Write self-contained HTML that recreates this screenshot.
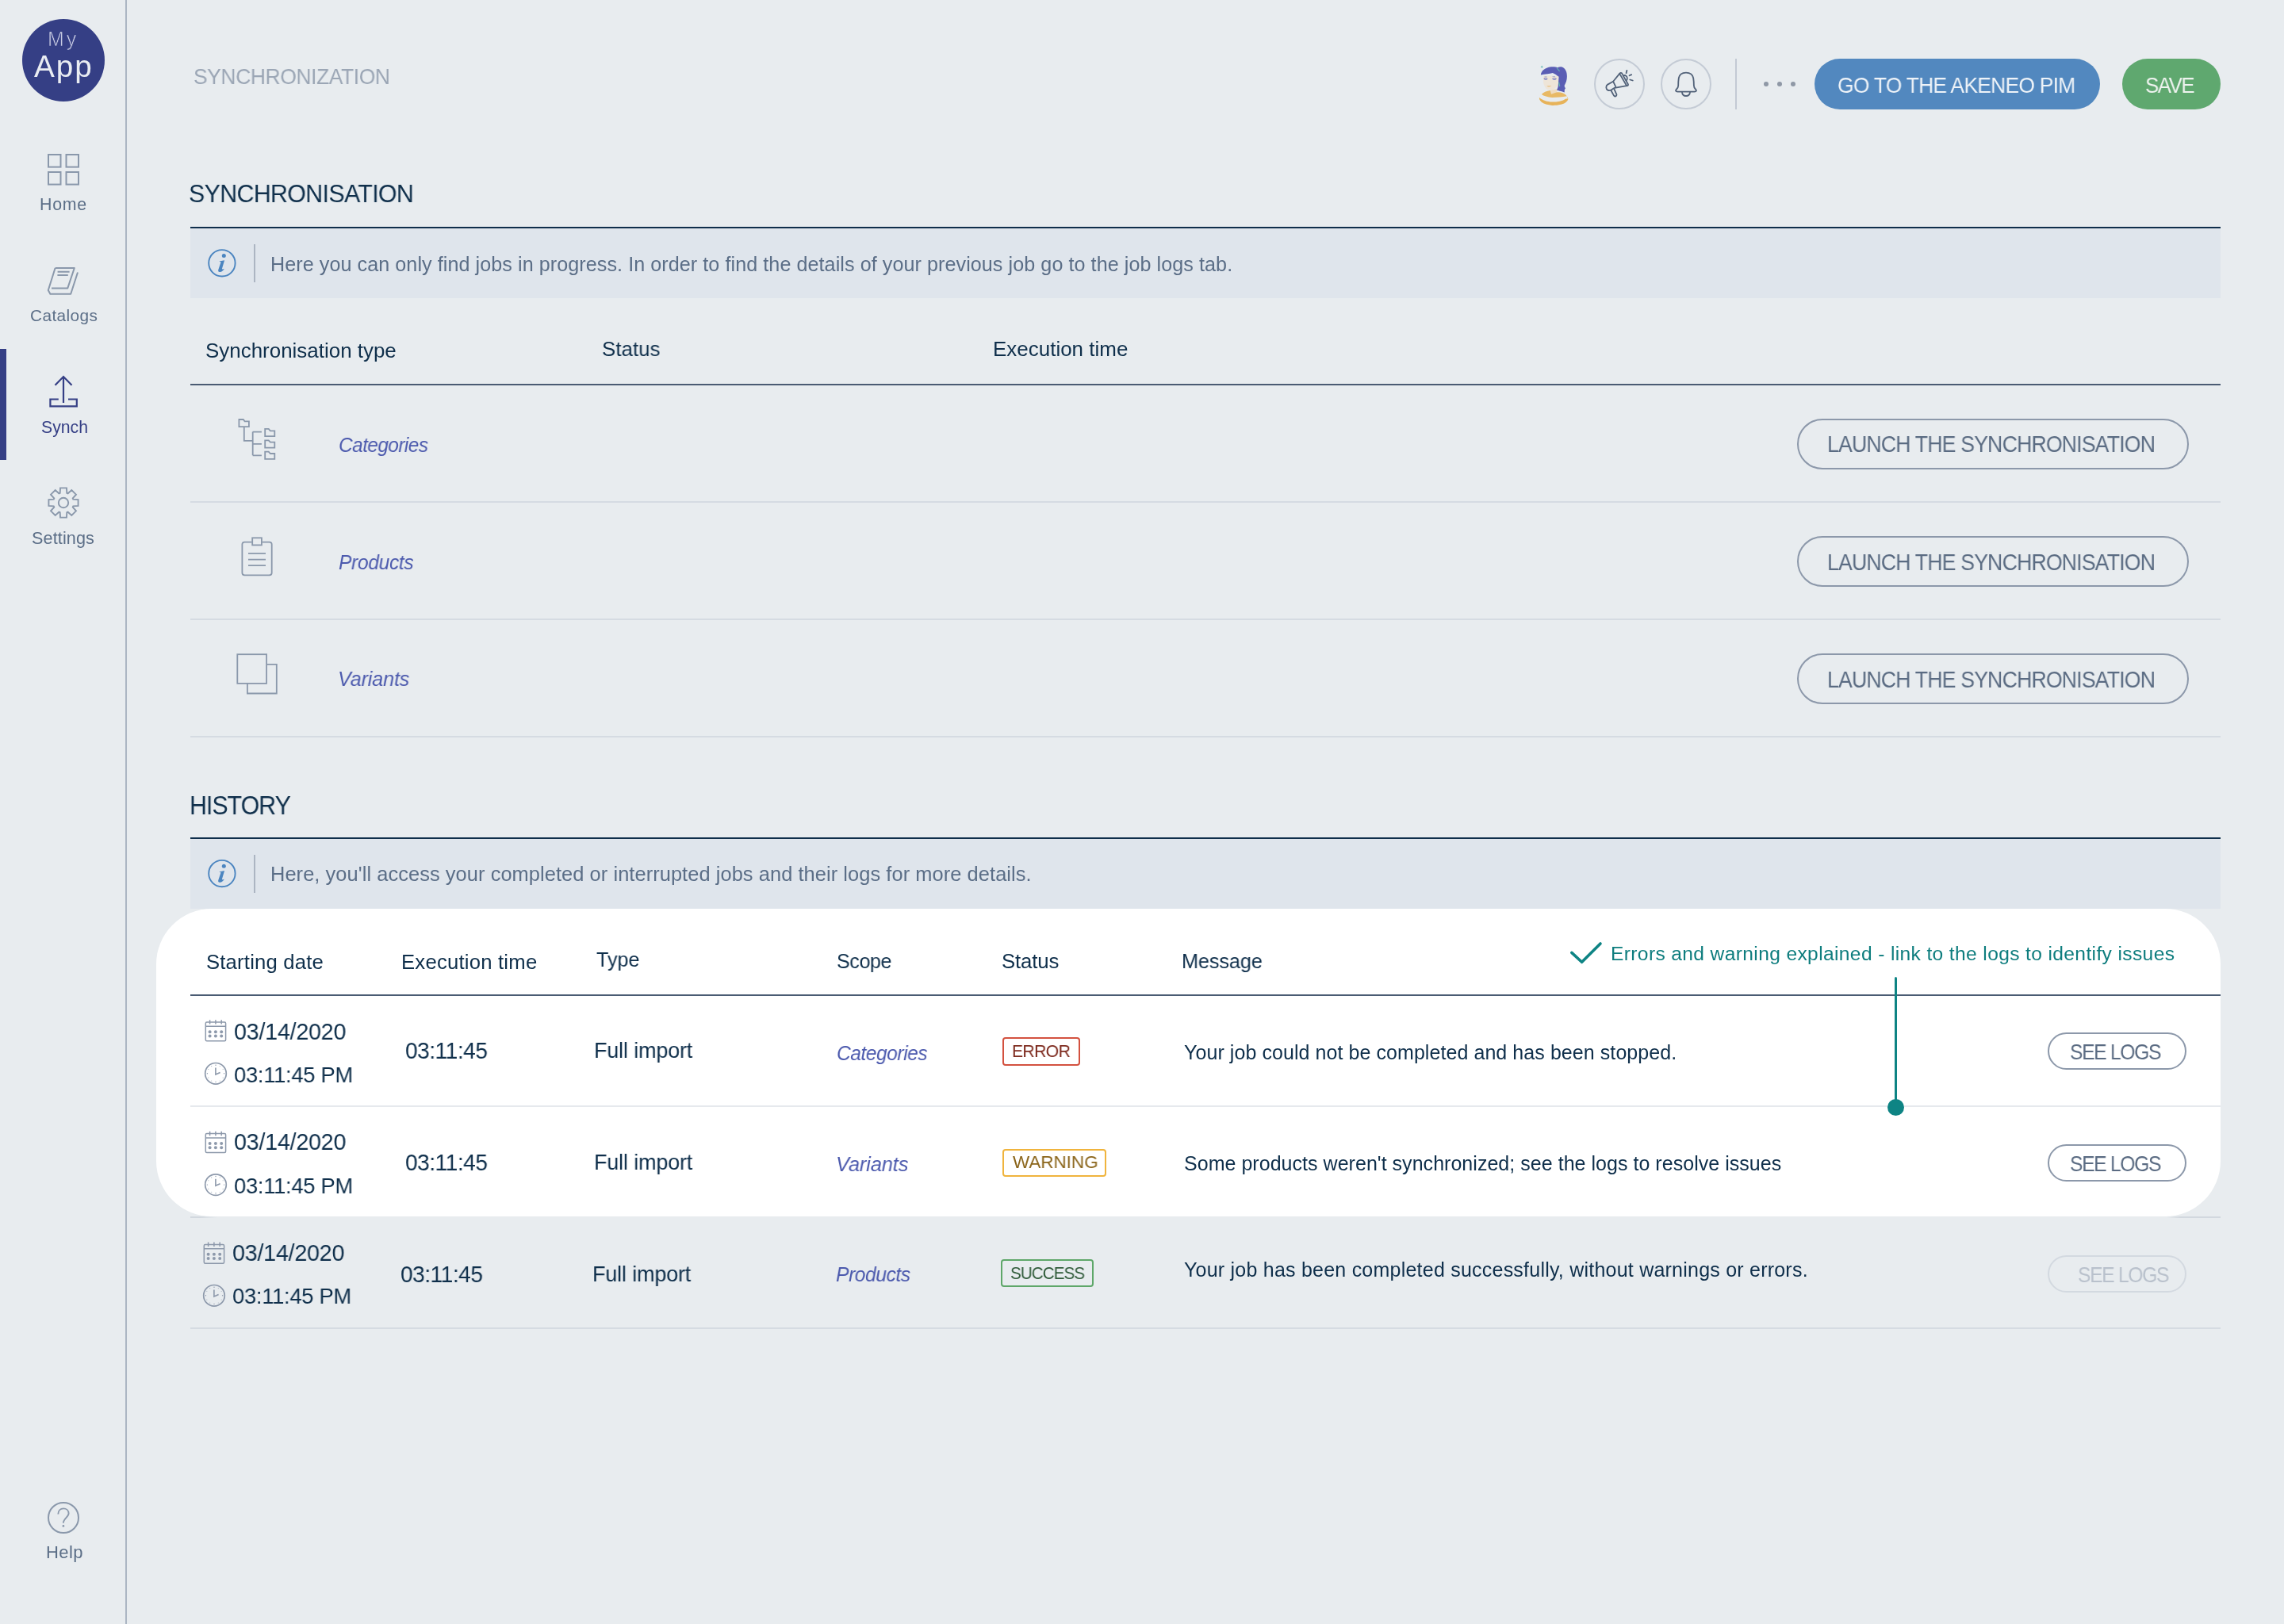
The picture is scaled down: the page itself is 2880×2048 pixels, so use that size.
<!DOCTYPE html>
<html><head><meta charset="utf-8"><title>Synchronization</title>
<style>
html,body{margin:0;padding:0;}
body{width:2880px;height:2048px;background:#e8ecef;position:relative;overflow:hidden;font-family:"Liberation Sans", sans-serif;}
.t{position:absolute;white-space:nowrap;will-change:transform;}
.a{position:absolute;}
</style></head><body>
<div class="a" style="left:158.0px;top:0.0px;width:2.0px;height:2048.0px;background:#abb5c3;"></div>
<div class="a" style="left:0.0px;top:440.0px;width:8.0px;height:140.0px;background:#353f85;"></div>
<div class="a" style="left:28.0px;top:24.0px;width:104.0px;height:104.0px;background:#353f85;border-radius:50%"></div>
<div class="a" style="left:2188.0px;top:74.0px;width:2.0px;height:64.0px;background:#c3cad4;"></div>
<div class="a" style="left:2288.0px;top:74.0px;width:360.0px;height:64.0px;background:#5288bf;border-radius:32px"></div>
<div class="a" style="left:2676.0px;top:74.0px;width:124.0px;height:64.0px;background:#5fa86f;border-radius:32px"></div>
<div class="a" style="left:240.0px;top:286.0px;width:2560.0px;height:2.0px;background:#0f2e4b;"></div>
<div class="a" style="left:240.0px;top:288.0px;width:2560.0px;height:87.5px;background:#dfe5ec;"></div>
<div class="a" style="left:320.2px;top:308.0px;width:1.8px;height:48.0px;background:#acb5c2;"></div>
<div class="a" style="left:240.0px;top:484.0px;width:2560.0px;height:2.0px;background:#4a5b73;"></div>
<div class="a" style="left:240.0px;top:632.0px;width:2560.0px;height:2.0px;background:#d5dbe2;"></div>
<div class="a" style="left:240.0px;top:780.0px;width:2560.0px;height:2.0px;background:#d5dbe2;"></div>
<div class="a" style="left:240.0px;top:928.0px;width:2560.0px;height:2.0px;background:#d5dbe2;"></div>
<div class="a" style="left:2266px;top:528.0px;width:490px;height:60px;border:2px solid #8c98aa;border-radius:32px;"></div>
<div class="a" style="left:2266px;top:676.2px;width:490px;height:60px;border:2px solid #8c98aa;border-radius:32px;"></div>
<div class="a" style="left:2266px;top:824.4px;width:490px;height:60px;border:2px solid #8c98aa;border-radius:32px;"></div>
<div class="a" style="left:240.0px;top:1056.0px;width:2560.0px;height:2.0px;background:#0f2e4b;"></div>
<div class="a" style="left:240.0px;top:1058.0px;width:2560.0px;height:87.5px;background:#dfe5ec;"></div>
<div class="a" style="left:320.2px;top:1078.0px;width:1.8px;height:48.0px;background:#acb5c2;"></div>
<div class="a" style="left:240.0px;top:1534.0px;width:34.0px;height:2.0px;background:linear-gradient(to right,#d2d8df 0%,#d2d8df 35%,rgba(210,216,223,0) 100%);"></div>
<div class="a" style="left:2732.0px;top:1534.0px;width:68.0px;height:2.0px;background:linear-gradient(to right,rgba(210,216,223,0) 0%,#d2d8df 25%,#d2d8df 100%);"></div>
<div class="a" style="left:197.0px;top:1146.0px;width:2603.0px;height:388.0px;background:#ffffff;border-radius:70px"></div>
<div class="a" style="left:240.0px;top:1254.0px;width:2560.0px;height:2.0px;background:#4a5b73;"></div>
<div class="a" style="left:240.0px;top:1394.0px;width:2560.0px;height:2.0px;background:#e6e9ed;"></div>
<div class="a" style="left:240.0px;top:1674.0px;width:2560.0px;height:2.0px;background:#d5dbe2;"></div>
<div class="a" style="left:1264px;top:1308px;width:94px;height:32px;border:2px solid #d3513f;border-radius:4px;"></div>
<div class="a" style="left:1264px;top:1448.5px;width:127px;height:31px;border:2px solid #f0b43d;border-radius:4px;"></div>
<div class="a" style="left:1262.4px;top:1588.4px;width:113px;height:31px;border:2px solid #5ea769;border-radius:4px;"></div>
<div class="a" style="left:2582px;top:1302.0px;width:171px;height:43px;border:2px solid #8c98aa;border-radius:24px;"></div>
<div class="a" style="left:2582px;top:1442.5px;width:171px;height:43px;border:2px solid #8c98aa;border-radius:24px;"></div>
<div class="a" style="left:2582px;top:1582.8px;width:171px;height:43px;border:2px solid #d3d9e0;border-radius:24px;"></div>
<div class="a" style="left:2388.5px;top:1232.0px;width:3.0px;height:164.0px;background:#0e8484;border-radius:1.5px"></div>
<div class="a" style="left:2379.5px;top:1385.5px;width:21.0px;height:21.0px;background:#0e8484;border-radius:50%"></div>
<svg class="a" style="left:0;top:0" width="2880" height="2048" viewBox="0 0 2880 2048"><rect x="61.0" y="195.0" width="15.5" height="15.6" fill="none" stroke="#8a98ab" stroke-width="2"/>
<rect x="83.5" y="195.0" width="15.5" height="15.6" fill="none" stroke="#8a98ab" stroke-width="2"/>
<rect x="61.0" y="217.0" width="15.5" height="15.6" fill="none" stroke="#8a98ab" stroke-width="2"/>
<rect x="83.5" y="217.0" width="15.5" height="15.6" fill="none" stroke="#8a98ab" stroke-width="2"/>
<g fill="none" stroke="#8a98ab" stroke-width="2" stroke-linejoin="round">
<path d="M69.6,338 H93.8 L85.3,363.4 H65"/>
<path d="M69.6,338 L60.8,366 L63.4,370.8 H89.2 L98,343.5"/>
<path d="M72.6,342.8 H87.6 M72.4,347 H85.8"/>
</g>
<g fill="none" stroke="#353f85" stroke-width="2.2">
<path d="M80,475 V508 M69.5,485.8 L80,475 L90.5,485.8"/>
<path d="M73.8,503.5 H63.4 V512.4 H96.8 V503.5 H86"/>
</g>
<path d="M75.68,621.74 L76.03,615.42 L83.97,615.42 L84.32,621.74 L85.62,622.28 L90.33,618.05 L95.95,623.67 L91.72,628.38 L92.26,629.68 L98.58,630.03 L98.58,637.97 L92.26,638.32 L91.72,639.62 L95.95,644.33 L90.33,649.95 L85.62,645.72 L84.32,646.26 L83.97,652.58 L76.03,652.58 L75.68,646.26 L74.38,645.72 L69.67,649.95 L64.05,644.33 L68.28,639.62 L67.74,638.32 L61.42,637.97 L61.42,630.03 L67.74,629.68 L68.28,628.38 L64.05,623.67 L69.67,618.05 L74.38,622.28 Z" fill="none" stroke="#8a98ab" stroke-width="1.9" stroke-linejoin="miter"/>
<circle cx="80" cy="634" r="6.2" fill="none" stroke="#8a98ab" stroke-width="1.9"/>
<circle cx="80" cy="1914" r="19" fill="none" stroke="#8a98ab" stroke-width="2"/>
<path d="M73.3,1909.6 C73.3,1905.2 76.2,1902.4 80,1902.4 C83.8,1902.4 86.6,1905 86.6,1908.6 C86.6,1912.8 80,1915.2 79.8,1920.6" fill="none" stroke="#8a98ab" stroke-width="1.9" stroke-linecap="butt"/>
<circle cx="79.9" cy="1924.4" r="1.4" fill="#8a98ab"/>
<g>
<path d="M1955.5,113.6 L1964.2,112 L1962.5,118 L1956.2,119.2 Z" fill="#efdcc0"/>
<path d="M1943.9,119 C1946,116.5 1950,114.6 1955,114 L1956,118.8 L1962.5,116.5 C1966.5,115.6 1972,117.2 1974.2,119.5 C1976.5,121.8 1977.5,124 1977.2,125.6 L1975.6,121.2 C1970,122.2 1964,122.7 1957.2,123.1 C1951.5,122.6 1946.5,121 1943.9,119 Z" fill="#e8b965"/>
<path d="M1940.9,123.1 C1945,126.5 1951,128.6 1957.2,128.6 C1964,128.6 1970,127.6 1974.6,124.4 L1977.4,124.6 C1977,128 1973,130.8 1968.3,131.8 C1964,132.8 1960,133 1957.2,132.9 C1951.5,132.6 1946.5,131 1943.5,128.6 C1941.5,126.8 1940.8,124.8 1940.9,123.1 Z" fill="#e7b35a"/>
<path d="M1946.1,95.4 L1965.7,95.7 L1964.6,107.6 C1962,111 1959,113.2 1955.7,113.5 C1952.5,113.6 1950.5,112.8 1949.3,111.5 C1947.5,108.5 1946.3,106 1946.1,103.9 Z" fill="#eee5d8"/>
<path d="M1942.8,94.4 C1943.5,89.5 1947.5,85.6 1955.7,84.3 C1959.5,84 1962,84.5 1964,85.2 C1966,84.2 1968,84 1970.2,84.8 C1974,86.5 1976,91 1975.9,96.5 C1975.8,101 1974.6,104.5 1972.6,108 C1972.8,109.8 1973.6,110.6 1974,111.5 C1973,112.2 1972.6,113.5 1972.8,116.4 C1970.5,115.6 1969,115.3 1968.3,115 C1966,114.6 1964.4,114.2 1963.1,113.5 C1964.2,111.2 1964.8,109.5 1964.8,107.6 L1965.6,96.8 C1963,95 1960.5,93 1957.9,92 C1955.5,92.6 1953.5,93 1951.3,93.2 C1948.5,93.6 1945.5,94 1942.8,94.4 Z" fill="#5a5db4"/>
<path d="M1963,85.6 L1966.6,89.8" stroke="#62b3b0" stroke-width="1.1"/>
<path d="M1946.8,99.2 C1948,98.3 1950,98.3 1951.2,99.4 C1950,100.9 1948,100.9 1946.8,99.2 Z M1957.6,99.4 C1958.8,98.3 1961,98.3 1962.4,99.4 C1961,100.9 1959,100.9 1957.6,99.4 Z" fill="#f7f4ee" stroke="#5a5db4" stroke-width="0.8"/>
<path d="M1947.5,96.8 h3 M1957.5,96.6 h3.5" stroke="#9a9ccc" stroke-width="0.7"/>
<path d="M1950.2,108.4 C1952,109.8 1954.5,109.8 1956.4,108.3 Z" fill="#e8b868"/>
<path d="M1965.6,103.6 L1966.8,109" stroke="#62b3b0" stroke-width="1.2"/>
<path d="M1944.2,82.5 l0.6,1.2 1.2,0.6 -1.2,0.6 -0.6,1.2 -0.6,-1.2 -1.2,-0.6 1.2,-0.6 Z" fill="#6cbcb8"/>
</g>
<circle cx="2042" cy="106" r="31" fill="none" stroke="#c4cbd5" stroke-width="2"/>
<circle cx="2126" cy="106" r="31" fill="none" stroke="#c4cbd5" stroke-width="2"/>
<g fill="none" stroke="#526279" stroke-width="1.8" stroke-linecap="round" stroke-linejoin="round">
<path d="M2042.2,92.9 C2042.8,91.6 2044.4,91.4 2045.2,92.6 L2052.9,106.2 C2053.5,107.4 2052.6,108.4 2051.2,108.2 Z"/>
<path d="M2042.2,92.9 L2034.1,102.7 L2027.2,106.6 C2024.6,108.4 2024.8,112.4 2027.2,113.6 C2028.6,114.3 2030,114.2 2031.4,113.5 L2036,110.8 L2051.2,108.2"/>
<path d="M2034.1,102.7 L2037.3,109.3"/>
<path d="M2031.4,114 L2035,120.6 C2036,122.2 2038.8,121.4 2038.4,119.2 L2035.4,112.4"/>
<path d="M2047,95.4 C2049.5,94.2 2052.6,96.5 2051.8,99.6 C2051.6,100.4 2051.3,100.9 2051,101.3"/>
<path d="M2051.4,88.8 L2050.6,92.2 M2057.2,94.1 L2054.6,95.3 M2055.3,100.5 L2058.8,101.5"/>
</g>
<g fill="none" stroke="#526279" stroke-width="2.1" stroke-linejoin="round">
<path d="M2116.2,108 C2116.2,104 2116.4,101 2116.8,98.5 C2117.6,94.2 2121,91.6 2126,91.6 C2131,91.6 2134.4,94.2 2135.2,98.5 C2135.6,101 2135.9,104 2135.9,108 C2135.9,110 2136.5,111 2138,112.5 C2139.8,114.2 2139,115.6 2136.8,115.6 L2115.2,115.6 C2113,115.6 2112.2,114.2 2114,112.5 C2115.5,111 2116.2,110 2116.2,108 Z" stroke-width="1.8"/>
<path d="M2120.9,115.8 C2121.2,119 2123.3,121 2126,121 C2128.7,121 2130.8,119 2131.1,115.8" stroke-width="1.8"/>
</g>
<circle cx="2227" cy="106" r="3" fill="#8f98a6"/>
<circle cx="2244" cy="106" r="3" fill="#8f98a6"/>
<circle cx="2261" cy="106" r="3" fill="#8f98a6"/>
<circle cx="279.9" cy="331.8" r="16.7" fill="none" stroke="#4b85c0" stroke-width="1.9"/>
<circle cx="282.3" cy="322.4" r="2.5" fill="#4b85c0"/>
<path transform="translate(0,0.0)" d="M276.3,329.6 L283.1,328.2 L279.9,339 C280.5,339.8 281.5,339.5 282.8,339 C281.5,341 279.5,343.2 277,343 C275,342.8 274.8,341.5 275.5,339.5 L278.6,330.5 C277.8,330.2 276.8,330 276.3,329.6 Z" fill="#4b85c0"/>
<circle cx="279.9" cy="1101.6" r="16.7" fill="none" stroke="#4b85c0" stroke-width="1.9"/>
<circle cx="282.3" cy="1092.2" r="2.5" fill="#4b85c0"/>
<path transform="translate(0,769.8)" d="M276.3,329.6 L283.1,328.2 L279.9,339 C280.5,339.8 281.5,339.5 282.8,339 C281.5,341 279.5,343.2 277,343 C275,342.8 274.8,341.5 275.5,339.5 L278.6,330.5 C277.8,330.2 276.8,330 276.3,329.6 Z" fill="#4b85c0"/>
<g fill="none" stroke="#8a98ab" stroke-width="1.8">
<path d="M301.4,538.2 V529 H306.8 L308.6,531.3 H313.9 V538.2 Z"/>
<path d="M307.8,538.2 V555.8 H318.7"/>
<path d="M318.7,544.6 V574.3 M318.7,544.6 H329.9 M318.7,559.9 H329.9 M318.7,574.3 H329.9"/>
<path d="M334.2,550.2 V540.9 H338.7 L340.9,543.3 H346.3 V550.2 Z"/>
<path d="M334.2,564.6 V555.3 H338.7 L340.9,557.7 H346.3 V564.6 Z"/>
<path d="M334.2,578.9 V569.6 H338.7 L340.9,572.0 H346.3 V578.9 Z"/>
</g>
<g fill="none" stroke="#8a98ab" stroke-width="1.8">
<path d="M317.6,683.6 H308.4 Q305.4,683.6 305.4,686.6 V722.3 Q305.4,725.3 308.4,725.3 H339.7 Q342.7,725.3 342.7,722.3 V686.6 Q342.7,683.6 339.7,683.6 H330.6"/>
<rect x="318.2" y="678.3" width="11.7" height="9.1"/>
<path d="M313,697.8 H335 M313,705.6 H335 M313,713.1 H335"/>
</g>
<g fill="none" stroke="#8a98ab" stroke-width="1.8">
<rect x="299.3" y="825.2" width="36.8" height="36.7"/>
<path d="M336.1,837.9 H348.8 V874.5 H311.9 V861.9"/>
</g>
<g transform="translate(0.0,0.0)" fill="none" stroke="#8d99ab" stroke-width="1.5"><rect x="259.3" y="1289" width="25.3" height="23.8" rx="1.5"/><path d="M259.3,1294.3 H284.6 M264.6,1286.2 V1291.6 M271.9,1286.2 V1291.6 M279.2,1286.2 V1291.6"/><circle cx="264.6" cy="1301.3" r="2" fill="#8d99ab" stroke="none"/><circle cx="264.6" cy="1306.6" r="2" fill="#8d99ab" stroke="none"/><circle cx="271.9" cy="1301.3" r="2" fill="#8d99ab" stroke="none"/><circle cx="271.9" cy="1306.6" r="2" fill="#8d99ab" stroke="none"/><circle cx="279.2" cy="1301.3" r="2" fill="#8d99ab" stroke="none"/><circle cx="279.2" cy="1306.6" r="2" fill="#8d99ab" stroke="none"/></g>
<g transform="translate(0.0,0.0)" fill="none" stroke="#8d99ab"><circle cx="272" cy="1353.8" r="13.3" stroke-width="1.7"/><path d="M271.9,1346.4 V1355 L277.6,1352.4" stroke-width="1.6"/><circle cx="272.00" cy="1343.20" r="0.7" fill="#8d99ab" stroke="none"/><circle cx="277.30" cy="1344.62" r="0.55" fill="#a3adbb" stroke="none"/><circle cx="281.18" cy="1348.50" r="0.55" fill="#a3adbb" stroke="none"/><circle cx="282.60" cy="1353.80" r="0.7" fill="#8d99ab" stroke="none"/><circle cx="281.18" cy="1359.10" r="0.55" fill="#a3adbb" stroke="none"/><circle cx="277.30" cy="1362.98" r="0.55" fill="#a3adbb" stroke="none"/><circle cx="272.00" cy="1364.40" r="0.7" fill="#8d99ab" stroke="none"/><circle cx="266.70" cy="1362.98" r="0.55" fill="#a3adbb" stroke="none"/><circle cx="262.82" cy="1359.10" r="0.55" fill="#a3adbb" stroke="none"/><circle cx="261.40" cy="1353.80" r="0.7" fill="#8d99ab" stroke="none"/><circle cx="262.82" cy="1348.50" r="0.55" fill="#a3adbb" stroke="none"/><circle cx="266.70" cy="1344.62" r="0.55" fill="#a3adbb" stroke="none"/></g>
<g transform="translate(0.0,140.6)" fill="none" stroke="#8d99ab" stroke-width="1.5"><rect x="259.3" y="1289" width="25.3" height="23.8" rx="1.5"/><path d="M259.3,1294.3 H284.6 M264.6,1286.2 V1291.6 M271.9,1286.2 V1291.6 M279.2,1286.2 V1291.6"/><circle cx="264.6" cy="1301.3" r="2" fill="#8d99ab" stroke="none"/><circle cx="264.6" cy="1306.6" r="2" fill="#8d99ab" stroke="none"/><circle cx="271.9" cy="1301.3" r="2" fill="#8d99ab" stroke="none"/><circle cx="271.9" cy="1306.6" r="2" fill="#8d99ab" stroke="none"/><circle cx="279.2" cy="1301.3" r="2" fill="#8d99ab" stroke="none"/><circle cx="279.2" cy="1306.6" r="2" fill="#8d99ab" stroke="none"/></g>
<g transform="translate(0.0,140.3)" fill="none" stroke="#8d99ab"><circle cx="272" cy="1353.8" r="13.3" stroke-width="1.7"/><path d="M271.9,1346.4 V1355 L277.6,1352.4" stroke-width="1.6"/><circle cx="272.00" cy="1343.20" r="0.7" fill="#8d99ab" stroke="none"/><circle cx="277.30" cy="1344.62" r="0.55" fill="#a3adbb" stroke="none"/><circle cx="281.18" cy="1348.50" r="0.55" fill="#a3adbb" stroke="none"/><circle cx="282.60" cy="1353.80" r="0.7" fill="#8d99ab" stroke="none"/><circle cx="281.18" cy="1359.10" r="0.55" fill="#a3adbb" stroke="none"/><circle cx="277.30" cy="1362.98" r="0.55" fill="#a3adbb" stroke="none"/><circle cx="272.00" cy="1364.40" r="0.7" fill="#8d99ab" stroke="none"/><circle cx="266.70" cy="1362.98" r="0.55" fill="#a3adbb" stroke="none"/><circle cx="262.82" cy="1359.10" r="0.55" fill="#a3adbb" stroke="none"/><circle cx="261.40" cy="1353.80" r="0.7" fill="#8d99ab" stroke="none"/><circle cx="262.82" cy="1348.50" r="0.55" fill="#a3adbb" stroke="none"/><circle cx="266.70" cy="1344.62" r="0.55" fill="#a3adbb" stroke="none"/></g>
<g transform="translate(-2.0,280.4)" fill="none" stroke="#8d99ab" stroke-width="1.5"><rect x="259.3" y="1289" width="25.3" height="23.8" rx="1.5"/><path d="M259.3,1294.3 H284.6 M264.6,1286.2 V1291.6 M271.9,1286.2 V1291.6 M279.2,1286.2 V1291.6"/><circle cx="264.6" cy="1301.3" r="2" fill="#8d99ab" stroke="none"/><circle cx="264.6" cy="1306.6" r="2" fill="#8d99ab" stroke="none"/><circle cx="271.9" cy="1301.3" r="2" fill="#8d99ab" stroke="none"/><circle cx="271.9" cy="1306.6" r="2" fill="#8d99ab" stroke="none"/><circle cx="279.2" cy="1301.3" r="2" fill="#8d99ab" stroke="none"/><circle cx="279.2" cy="1306.6" r="2" fill="#8d99ab" stroke="none"/></g>
<g transform="translate(-2.0,280.0)" fill="none" stroke="#8d99ab"><circle cx="272" cy="1353.8" r="13.3" stroke-width="1.7"/><path d="M271.9,1346.4 V1355 L277.6,1352.4" stroke-width="1.6"/><circle cx="272.00" cy="1343.20" r="0.7" fill="#8d99ab" stroke="none"/><circle cx="277.30" cy="1344.62" r="0.55" fill="#a3adbb" stroke="none"/><circle cx="281.18" cy="1348.50" r="0.55" fill="#a3adbb" stroke="none"/><circle cx="282.60" cy="1353.80" r="0.7" fill="#8d99ab" stroke="none"/><circle cx="281.18" cy="1359.10" r="0.55" fill="#a3adbb" stroke="none"/><circle cx="277.30" cy="1362.98" r="0.55" fill="#a3adbb" stroke="none"/><circle cx="272.00" cy="1364.40" r="0.7" fill="#8d99ab" stroke="none"/><circle cx="266.70" cy="1362.98" r="0.55" fill="#a3adbb" stroke="none"/><circle cx="262.82" cy="1359.10" r="0.55" fill="#a3adbb" stroke="none"/><circle cx="261.40" cy="1353.80" r="0.7" fill="#8d99ab" stroke="none"/><circle cx="262.82" cy="1348.50" r="0.55" fill="#a3adbb" stroke="none"/><circle cx="266.70" cy="1344.62" r="0.55" fill="#a3adbb" stroke="none"/></g>
<path d="M1981.8,1201.4 L1994.6,1213.3 L2018,1190" fill="none" stroke="#0e8484" stroke-width="3.6" stroke-linecap="round" stroke-linejoin="round"/></svg>
<div class="t" id="my" style="left:60.4px;top:37.0px;font-size:25.00px;line-height:25.00px;letter-spacing:3.000px;color:#cdd0e6;-webkit-text-stroke:0.7px #353f85;">My</div>
<div class="t" id="app" style="left:43.0px;top:65.2px;font-size:38.65px;line-height:38.65px;letter-spacing:2.000px;color:#e9ecf2;;">App</div>
<div class="t" id="home" style="left:49.8px;top:247.9px;font-size:21.35px;line-height:21.35px;letter-spacing:0.733px;color:#5b6e87;;">Home</div>
<div class="t" id="cat" style="left:38.2px;top:388.2px;font-size:20.81px;line-height:20.81px;letter-spacing:0.400px;color:#5b6e87;;">Catalogs</div>
<div class="t" id="syn" style="left:51.8px;top:527.9px;font-size:21.22px;line-height:21.22px;letter-spacing:0.000px;color:#353f85;;transform:scaleX(0.9947);transform-origin:0 0;">Synch</div>
<div class="t" id="set" style="left:40.2px;top:667.5px;font-size:21.62px;line-height:21.62px;letter-spacing:0.114px;color:#5b6e87;;">Settings</div>
<div class="t" id="help" style="left:57.6px;top:1947.3px;font-size:22.03px;line-height:22.03px;letter-spacing:0.400px;color:#5b6e87;;">Help</div>
<div class="t" id="hdr" style="left:243.8px;top:82.9px;font-size:27.29px;line-height:27.29px;letter-spacing:-0.384px;color:#9ba6b5;;transform:scaleX(0.9677);transform-origin:0 0;">SYNCHRONIZATION</div>
<div class="t" id="pim" style="left:2317.0px;top:92.5px;font-size:28.29px;line-height:28.29px;letter-spacing:-0.799px;color:#eef3f8;;transform:scaleX(0.9350);transform-origin:0 0;">GO TO THE AKENEO PIM</div>
<div class="t" id="save" style="left:2705.2px;top:92.5px;font-size:28.29px;line-height:28.29px;letter-spacing:-1.608px;color:#eef3ef;;transform:scaleX(0.9120);transform-origin:0 0;">SAVE</div>
<div class="t" id="s1" style="left:238.4px;top:229.1px;font-size:31.71px;line-height:31.71px;letter-spacing:-0.671px;color:#0f2f4b;;transform:scaleX(0.9575);transform-origin:0 0;">SYNCHRONISATION</div>
<div class="t" id="info1" style="left:341.0px;top:320.7px;font-size:25.14px;line-height:25.14px;letter-spacing:0.069px;color:#5b6e87;;">Here you can only find jobs in progress. In order to find the details of your previous job go to the job logs tab.</div>
<div class="t" id="h_st" style="left:259.0px;top:430.0px;font-size:25.95px;line-height:25.95px;letter-spacing:0.000px;color:#0f2f4b;;transform:scaleX(0.9987);transform-origin:0 0;">Synchronisation type</div>
<div class="t" id="h_status" style="left:759.2px;top:428.0px;font-size:25.95px;line-height:25.95px;letter-spacing:0.081px;color:#0f2f4b;;transform:scaleX(0.9925);transform-origin:0 0;">Status</div>
<div class="t" id="h_exec" style="left:1252.4px;top:428.0px;font-size:25.95px;line-height:25.95px;letter-spacing:0.015px;color:#0f2f4b;;">Execution time</div>
<div class="t" id="r_cat" style="left:427.0px;top:547.9px;font-size:26.08px;line-height:26.08px;letter-spacing:-0.594px;color:#4b59ad;font-style:italic;transform:scaleX(0.9357);transform-origin:0 0;">Categories</div>
<div class="t" id="r_prod" style="left:427.0px;top:696.8px;font-size:25.27px;line-height:25.27px;letter-spacing:-0.295px;color:#4b59ad;font-style:italic;transform:scaleX(0.9691);transform-origin:0 0;">Products</div>
<div class="t" id="r_var" style="left:426.0px;top:844.3px;font-size:25.68px;line-height:25.68px;letter-spacing:-0.146px;color:#4b59ad;font-style:italic;transform:scaleX(0.9801);transform-origin:0 0;">Variants</div>
<div class="t" id="launch0" style="left:2304.0px;top:546.4px;font-size:28.57px;line-height:28.57px;letter-spacing:-0.858px;color:#5a6b82;;transform:scaleX(0.9321);transform-origin:0 0;">LAUNCH THE SYNCHRONISATION</div>
<div class="t" id="launch1" style="left:2304.0px;top:694.6px;font-size:28.57px;line-height:28.57px;letter-spacing:-0.858px;color:#5a6b82;;transform:scaleX(0.9321);transform-origin:0 0;">LAUNCH THE SYNCHRONISATION</div>
<div class="t" id="launch2" style="left:2304.0px;top:842.8px;font-size:28.57px;line-height:28.57px;letter-spacing:-0.858px;color:#5a6b82;;transform:scaleX(0.9321);transform-origin:0 0;">LAUNCH THE SYNCHRONISATION</div>
<div class="t" id="s2" style="left:239.0px;top:999.5px;font-size:32.29px;line-height:32.29px;letter-spacing:-1.064px;color:#0f2f4b;;transform:scaleX(0.9401);transform-origin:0 0;">HISTORY</div>
<div class="t" id="info2" style="left:341.0px;top:1090.3px;font-size:25.41px;line-height:25.41px;letter-spacing:0.067px;color:#5b6e87;;">Here, you&#39;ll access your completed or interrupted jobs and their logs for more details.</div>
<div class="t" id="hh_sd" style="left:259.6px;top:1200.6px;font-size:25.68px;line-height:25.68px;letter-spacing:0.183px;color:#0f2f4b;;">Starting date</div>
<div class="t" id="hh_ex" style="left:506.4px;top:1200.6px;font-size:25.68px;line-height:25.68px;letter-spacing:0.215px;color:#0f2f4b;;">Execution time</div>
<div class="t" id="hh_ty" style="left:752.0px;top:1197.9px;font-size:25.68px;line-height:25.68px;letter-spacing:-0.068px;color:#0f2f4b;;transform:scaleX(0.9802);transform-origin:0 0;">Type</div>
<div class="t" id="hh_sc" style="left:1054.8px;top:1200.1px;font-size:25.81px;line-height:25.81px;letter-spacing:-0.361px;color:#0f2f4b;;transform:scaleX(0.9693);transform-origin:0 0;">Scope</div>
<div class="t" id="hh_stt" style="left:1263.4px;top:1200.1px;font-size:25.81px;line-height:25.81px;letter-spacing:-0.160px;color:#0f2f4b;;transform:scaleX(0.9983);transform-origin:0 0;">Status</div>
<div class="t" id="hh_msg" style="left:1490.2px;top:1200.1px;font-size:25.81px;line-height:25.81px;letter-spacing:-0.136px;color:#0f2f4b;;transform:scaleX(0.9811);transform-origin:0 0;">Message</div>
<div class="t" id="callout" style="left:2030.8px;top:1190.8px;font-size:24.59px;line-height:24.59px;letter-spacing:0.366px;color:#0e7d7e;;">Errors and warning explained - link to the logs to identify issues</div>
<div class="t" id="d0" style="left:295.0px;top:1285.5px;font-size:29.43px;line-height:29.43px;letter-spacing:-0.273px;color:#0f2f4b;;transform:scaleX(0.9766);transform-origin:0 0;">03/14/2020</div>
<div class="t" id="tm0" style="left:295.0px;top:1340.5px;font-size:28.29px;line-height:28.29px;letter-spacing:-0.310px;color:#0f2f4b;;transform:scaleX(0.9687);transform-origin:0 0;">03:11:45 PM</div>
<div class="t" id="ex0" style="left:510.8px;top:1309.7px;font-size:29.43px;line-height:29.43px;letter-spacing:-0.509px;color:#0f2f4b;;transform:scaleX(0.9551);transform-origin:0 0;">03:11:45</div>
<div class="t" id="fi0" style="left:749.0px;top:1311.0px;font-size:27.84px;line-height:27.84px;letter-spacing:-0.185px;color:#0f2f4b;;transform:scaleX(0.9706);transform-origin:0 0;">Full import</div>
<div class="t" id="sc0" style="left:1054.8px;top:1314.9px;font-size:26.08px;line-height:26.08px;letter-spacing:-0.519px;color:#4b59ad;font-style:italic;transform:scaleX(0.9428);transform-origin:0 0;">Categories</div>
<div class="t" id="bd0" style="left:1276.4px;top:1314.8px;font-size:22.57px;line-height:22.57px;letter-spacing:-0.693px;color:#7e2b1f;;transform:scaleX(0.9379);transform-origin:0 0;">ERROR</div>
<div class="t" id="msg0" style="left:1493.0px;top:1314.6px;font-size:25.00px;line-height:25.00px;letter-spacing:0.069px;color:#0f2f4b;;">Your job could not be completed and has been stopped.</div>
<div class="t" id="lg0" style="left:2610.0px;top:1313.2px;font-size:27.57px;line-height:27.57px;letter-spacing:-1.470px;color:#5a6b82;;transform:scaleX(0.8942);transform-origin:0 0;">SEE LOGS</div>
<div class="t" id="d1" style="left:295.0px;top:1425.3px;font-size:29.43px;line-height:29.43px;letter-spacing:-0.273px;color:#0f2f4b;;transform:scaleX(0.9766);transform-origin:0 0;">03/14/2020</div>
<div class="t" id="tm1" style="left:295.0px;top:1480.6px;font-size:28.29px;line-height:28.29px;letter-spacing:-0.310px;color:#0f2f4b;;transform:scaleX(0.9687);transform-origin:0 0;">03:11:45 PM</div>
<div class="t" id="ex1" style="left:510.8px;top:1450.6px;font-size:29.43px;line-height:29.43px;letter-spacing:-0.509px;color:#0f2f4b;;transform:scaleX(0.9551);transform-origin:0 0;">03:11:45</div>
<div class="t" id="fi1" style="left:749.0px;top:1451.9px;font-size:27.84px;line-height:27.84px;letter-spacing:-0.185px;color:#0f2f4b;;transform:scaleX(0.9706);transform-origin:0 0;">Full import</div>
<div class="t" id="sc1" style="left:1053.8px;top:1454.8px;font-size:26.08px;line-height:26.08px;letter-spacing:-0.175px;color:#4b59ad;font-style:italic;transform:scaleX(0.9783);transform-origin:0 0;">Variants</div>
<div class="t" id="bd1" style="left:1277.0px;top:1455.0px;font-size:22.57px;line-height:22.57px;letter-spacing:0.000px;color:#8a6419;;transform:scaleX(0.9944);transform-origin:0 0;">WARNING</div>
<div class="t" id="msg1" style="left:1493.0px;top:1454.5px;font-size:25.00px;line-height:25.00px;letter-spacing:0.034px;color:#0f2f4b;;">Some products weren&#39;t synchronized; see the logs to resolve issues</div>
<div class="t" id="lg1" style="left:2610.0px;top:1453.7px;font-size:27.57px;line-height:27.57px;letter-spacing:-1.470px;color:#5a6b82;;transform:scaleX(0.8942);transform-origin:0 0;">SEE LOGS</div>
<div class="t" id="d2" style="left:293.0px;top:1565.1px;font-size:29.43px;line-height:29.43px;letter-spacing:-0.273px;color:#0f2f4b;;transform:scaleX(0.9766);transform-origin:0 0;">03/14/2020</div>
<div class="t" id="tm2" style="left:293.0px;top:1619.6px;font-size:28.29px;line-height:28.29px;letter-spacing:-0.310px;color:#0f2f4b;;transform:scaleX(0.9687);transform-origin:0 0;">03:11:45 PM</div>
<div class="t" id="ex2" style="left:504.8px;top:1591.6px;font-size:29.43px;line-height:29.43px;letter-spacing:-0.509px;color:#0f2f4b;;transform:scaleX(0.9551);transform-origin:0 0;">03:11:45</div>
<div class="t" id="fi2" style="left:746.8px;top:1592.9px;font-size:27.84px;line-height:27.84px;letter-spacing:-0.185px;color:#0f2f4b;;transform:scaleX(0.9706);transform-origin:0 0;">Full import</div>
<div class="t" id="sc2" style="left:1054.0px;top:1593.9px;font-size:26.08px;line-height:26.08px;letter-spacing:-0.512px;color:#4b59ad;font-style:italic;transform:scaleX(0.9480);transform-origin:0 0;">Products</div>
<div class="t" id="bd2" style="left:1273.6px;top:1594.9px;font-size:22.57px;line-height:22.57px;letter-spacing:-1.056px;color:#2f5b39;;transform:scaleX(0.9151);transform-origin:0 0;">SUCCESS</div>
<div class="t" id="msg2" style="left:1493.0px;top:1588.8px;font-size:25.00px;line-height:25.00px;letter-spacing:0.226px;color:#0f2f4b;;">Your job has been completed successfully, without warnings or errors.</div>
<div class="t" id="lg2" style="left:2619.8px;top:1594.2px;font-size:27.57px;line-height:27.57px;letter-spacing:-1.470px;color:#b9c1cc;;transform:scaleX(0.8942);transform-origin:0 0;">SEE LOGS</div>
</body></html>
